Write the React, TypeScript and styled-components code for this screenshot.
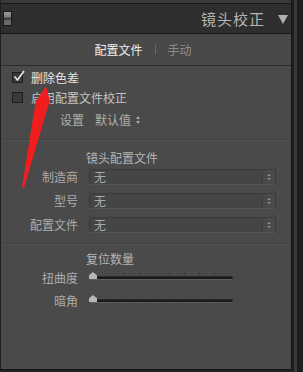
import React from 'react';
import styled, { createGlobalStyle } from 'styled-components';

const GlobalStyle = createGlobalStyle`
  html, body {
    margin: 0;
    padding: 0;
    background: #232323;
    width: 303px;
    height: 372px;
    overflow: hidden;
  }
  body {
    font-family: 'Noto Sans CJK SC', 'Noto Sans', sans-serif;
  }
`;

const Page = styled.div`
  position: relative;
  display: flex;
  width: 303px;
  height: 372px;
`;

const Panel = styled.div`
  display: flex;
  flex-direction: column;
  width: 290px;
  height: 369px;
  border-left: 1px solid #1f1f1f;
  border-right: 1px solid #161616;
  border-bottom: 1px solid #141414;
  background: #4a4a4a;
`;

const Gutter = styled.div`
  display: flex;
  width: 11px;
  height: 372px;
  background: #1e1e1e;

  & > div {
    width: 3px;
    margin-left: 2px;
    background: #383838;
  }
`;

const TopStrip = styled.div`
  height: 3px;
  background: #393939;
  border-bottom: 1px solid #181818;
`;

const Header = styled.div`
  display: flex;
  align-items: center;
  height: 29px;
  padding: 0 3px 0 2px;
  background: #2e2e2e;
  border-bottom: 1px solid #1a1a1a;
`;

const Toggle = styled.div`
  width: 7px;
  height: 13px;
  border: 1px solid #1a1a1a;
  background: linear-gradient(#9a9a9a 0%, #7a7a7a 40%, #3e3e3e 45%, #3e3e3e 60%, #6a6a6a 65%, #6a6a6a 100%);
`;

const Title = styled.div`
  margin-left: auto;
  font-size: 15px;
  letter-spacing: 1px;
  color: #b5b5b5;
`;

const Caret = styled.div`
  width: 0;
  height: 0;
  margin: 2px 0 0 13px;
  border-left: 5px solid transparent;
  border-right: 5px solid transparent;
  border-top: 9px solid #b0b0b0;
`;

const Tabs = styled.div`
  display: flex;
  align-items: center;
  justify-content: center;
  gap: 12px;
  height: 31px;
  padding-right: 6px;
  background: #484848;
  border-bottom: 1px solid #2c2c2c;
  font-size: 12px;
`;

const Tab = styled.span<{ $active?: boolean }>`
  color: ${(p) => (p.$active ? '#f0f0f0' : '#8c8c8c')};
`;

const TabDivider = styled.span`
  width: 1px;
  height: 9px;
  background: #6a6a6a;
`;

const Content = styled.div`
  display: flex;
  flex-direction: column;
  padding-top: 1px;
`;

const CheckRow = styled.div`
  display: flex;
  align-items: center;
  height: 20px;
  padding-left: 11px;
  gap: 8px;
  font-size: 12px;
`;

const Box = styled.div`
  position: relative;
  width: 9px;
  height: 9px;
  border: 1px solid #1e1e1e;
  background: #3a3a3a;

  & svg {
    position: absolute;
    left: 0;
    top: -3px;
  }
`;

const CheckLabel = styled.span<{ $bright?: boolean }>`
  color: ${(p) => (p.$bright ? '#e6e6e6' : '#c4c4c4')};
`;

const SettingRow = styled.div`
  display: flex;
  align-items: center;
  height: 25px;
  padding-left: 59px;
  font-size: 12px;
  color: #b0b0b0;
  gap: 11px;
`;

const Stepper = styled.span`
  display: inline-flex;
  flex-direction: column;
  gap: 2px;
  margin-left: -6px;

  & i {
    width: 0;
    height: 0;
    border-left: 2px solid transparent;
    border-right: 2px solid transparent;
  }
  & i:first-child {
    border-bottom: 3px solid #a8a8a8;
  }
  & i:last-child {
    border-top: 3px solid #a8a8a8;
  }
`;

const Separator = styled.div<{ $gap: number }>`
  height: 1px;
  margin: ${(p) => p.$gap}px 4px 0 4px;
  background: #3b3b3b;
  border-bottom: 1px solid #545454;
`;

const SectionTitle = styled.div<{ $gap: number }>`
  padding-left: 85px;
  height: 22px;
  display: flex;
  align-items: center;
  margin-top: ${(p) => p.$gap}px;
  font-size: 12px;
  color: #b4b4b4;
`;

const FieldGrid = styled.div`
  display: grid;
  grid-template-columns: 77px 187px;
  column-gap: 11px;
  row-gap: 7px;
  align-items: center;
  font-size: 12px;
`;

const FieldLabel = styled.span`
  text-align: right;
  color: #acacac;
`;

const Select = styled.div`
  display: flex;
  height: 14px;
  border: 1px solid #3a3a3a;
  border-bottom-color: #555555;
  background: #454545;
  color: #a8a8a8;
  font-size: 12px;
  line-height: 14px;

  & span {
    flex: 1;
    padding-left: 4px;
  }
`;

const SelectArrows = styled.div`
  display: flex;
  flex-direction: column;
  align-items: center;
  justify-content: center;
  gap: 2px;
  width: 12px;
  border-left: 1px solid #3c3c3c;
  background: #4a4a4a;

  & i {
    width: 0;
    height: 0;
    border-left: 2px solid transparent;
    border-right: 2px solid transparent;
  }
  & i:first-child {
    border-bottom: 2px solid #8c8c8c;
  }
  & i:last-child {
    border-top: 2px solid #8c8c8c;
  }
`;

const SliderGrid = styled.div`
  display: grid;
  grid-template-columns: 77px 144px;
  column-gap: 11px;
  row-gap: 6px;
  align-items: center;
  font-size: 12px;
`;

const Slider = styled.div`
  position: relative;
  height: 15px;
`;

const Track = styled.div`
  position: absolute;
  left: 0;
  right: 0;
  top: 6px;
  height: 2px;
  background: #1a1a1a;
  border-top: 1px solid #2a2a2a;
  border-bottom: 1px solid #5e5e5e;
  border-radius: 2px;
`;

const Ticks = styled.div`
  position: absolute;
  left: 5px;
  right: 4px;
  top: 2px;
  height: 2px;
  background-image: repeating-linear-gradient(90deg, #363636 0 1px, transparent 1px 15px);
`;

const Thumb = styled.div`
  position: absolute;
  left: 0;
  top: 2px;
  width: 8px;
  height: 7px;
  background: #b8b8b8;
  clip-path: polygon(50% 0, 100% 45%, 100% 100%, 0 100%, 0 45%);
`;

const Arrow = styled.svg`
  position: absolute;
  left: 0;
  top: 0;
  pointer-events: none;
`;

const fields = ['制造商', '型号', '配置文件'];
const sliders = ['扭曲度', '暗角'];

export default function App() {
  return (
    <>
      <GlobalStyle />
      <Page>
        <Panel>
          <TopStrip />
          <Header>
            <Toggle />
            <Title>镜头校正</Title>
            <Caret />
          </Header>
          <Tabs>
            <Tab $active>配置文件</Tab>
            <TabDivider />
            <Tab>手动</Tab>
          </Tabs>
          <Content>
            <CheckRow>
              <Box>
                <svg width="12" height="12" viewBox="0 0 12 12">
                  <path d="M1.5 6.5 L4.5 10 L11 1" fill="none" stroke="#e8e8e8" strokeWidth="1.6" />
                </svg>
              </Box>
              <CheckLabel $bright>删除色差</CheckLabel>
            </CheckRow>
            <CheckRow>
              <Box />
              <CheckLabel>启用配置文件校正</CheckLabel>
            </CheckRow>
            <SettingRow>
              <span>设置</span>
              <span>默认值</span>
              <Stepper>
                <i />
                <i />
              </Stepper>
            </SettingRow>
            <Separator $gap={7} />
            <SectionTitle $gap={5}>镜头配置文件</SectionTitle>
            <FieldGrid>
              {fields.map((f) => (
                <React.Fragment key={f}>
                  <FieldLabel>{f}</FieldLabel>
                  <Select>
                    <span>无</span>
                    <SelectArrows>
                      <i />
                      <i />
                    </SelectArrows>
                  </Select>
                </React.Fragment>
              ))}
            </FieldGrid>
            <Separator $gap={10} />
            <SectionTitle $gap={2}>复位数量</SectionTitle>
            <SliderGrid>
              {sliders.map((s) => (
                <React.Fragment key={s}>
                  <FieldLabel>{s}</FieldLabel>
                  <Slider>
                    <Ticks />
                    <Track />
                    <Thumb />
                  </Slider>
                </React.Fragment>
              ))}
            </SliderGrid>
          </Content>
        </Panel>
        <Gutter>
          <div />
        </Gutter>
        <Arrow width="303" height="372" viewBox="0 0 303 372">
          <polygon points="46,86 50,101 46,113 24,188 22,187 33,118 36,101" fill="#f01e1e" />
        </Arrow>
      </Page>
    </>
  );
}
